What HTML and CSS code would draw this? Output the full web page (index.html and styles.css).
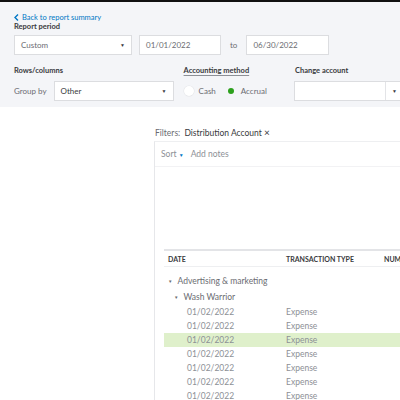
FILE: index.html
```html
<!DOCTYPE html>
<html lang="en">
  <head>
    <meta charset="UTF-8" />
    <meta name="viewport" content="width=device-width, initial-scale=1.0" />
    <title>Transaction Detail by Account</title>
    <link rel="stylesheet" href="styles.css">
  </head>
  <body>
    <div class="topbar"></div>

    <div class="controls">
      <a class="back" href="#">
        <svg width="5" height="7" viewBox="0 0 5 7"><path d="M4 0.5 L1 3.5 L4 6.5" fill="none" stroke="#0077c5" stroke-width="1.4"/></svg>
        Back to report summary
      </a>
      <div class="label">Report period</div>
      <div class="period">
        <div class="select custom">Custom <span class="caret">▼</span></div>
        <div class="input date">01/01/2022</div>
        <span class="to">to</span>
        <div class="input date date-end">06/30/2022</div>
      </div>

      <div class="options">
        <div class="group rows">
          <div class="label">Rows/columns</div>
          <div class="field">
            <span class="muted">Group by</span>
            <div class="select groupby">Other <span class="caret">▼</span></div>
          </div>
        </div>
        <div class="group method">
          <div class="label underline">Accounting method</div>
          <div class="field radios">
            <span class="radio"></span><span class="muted">Cash</span>
            <span class="radio checked"></span><span class="muted">Accrual</span>
          </div>
        </div>
        <div class="divider"></div>
        <div class="group account">
          <div class="label">Change account</div>
          <div class="select account-select"><span class="split"></span><span class="caret">▼</span></div>
        </div>
      </div>
    </div>

    <div class="report">
      <div class="filters">
        Filters: <span class="chip">Distribution Account</span> <span class="close">×</span>
      </div>
      <div class="card">
        <div class="toolbar">
          <span>Sort <span class="sort-caret">▼</span></span>
          <span>Add notes</span>
        </div>
        <div class="header-space"></div>
        <div class="table">
          <div class="thead">
            <span>DATE</span>
            <span>TRANSACTION TYPE</span>
            <span>NUM</span>
          </div>
          <div class="section">
            <div class="group-row"><span class="tri">▼</span>Advertising &amp; marketing</div>
            <div class="group-row sub"><span class="tri">▼</span>Wash Warrior</div>
            <div class="row"><span>01/02/2022</span><span>Expense</span></div>
            <div class="row"><span>01/02/2022</span><span>Expense</span></div>
            <div class="row selected"><span>01/02/2022</span><span>Expense</span></div>
            <div class="row"><span>01/02/2022</span><span>Expense</span></div>
            <div class="row"><span>01/02/2022</span><span>Expense</span></div>
            <div class="row"><span>01/02/2022</span><span>Expense</span></div>
            <div class="row"><span>01/02/2022</span><span>Expense</span></div>
          </div>
        </div>
      </div>
    </div>
  </body>
</html>
```

FILE: styles.css
```css
body {
  margin: 0;
  font-family: "Lato", "Open Sans", sans-serif;
  font-size: 8px;
  color: #393a3d;
  background: #fff;
  overflow: hidden;
}

.topbar {
  height: 2px;
  background: #111;
}

.controls {
  background: #f4f5f8;
  padding: 11px 14px 0;
  height: 94px;
}

.back {
  display: flex;
  align-items: center;
  gap: 3px;
  color: #0077c5;
  text-decoration: none;
  font-size: 7.5px;
  line-height: 9px;
}

.label {
  font-weight: bold;
  font-size: 7.5px;
  line-height: 9px;
  white-space: nowrap;
}

.underline {
  text-decoration: underline;
  text-decoration-color: #8d9096;
  text-underline-offset: 2px;
}

.period {
  display: flex;
  align-items: center;
  margin-top: 4px;
}

.select,
.input {
  box-sizing: border-box;
  height: 20px;
  background: #fff;
  border: 1px solid #dcdde0;
  display: flex;
  align-items: center;
  flex-shrink: 0;
  padding: 0 6px;
  font-size: 8px;
  color: #6b6c72;
}

.caret {
  margin-left: auto;
  font-size: 5px;
  color: #393a3d;
}

.custom {
  width: 118px;
}

.date {
  width: 82px;
  margin-left: 7px;
}

.to {
  margin: 0 9px;
  font-size: 8px;
  color: #6b6c72;
}

.date-end {
  margin-left: 0;
  width: 83px;
}

.options {
  display: flex;
  margin-top: 11px;
  align-items: flex-start;
}

.group {
  flex-shrink: 0;
}

.group .label {
  margin-bottom: 6px;
}

.field {
  display: flex;
  align-items: center;
  height: 20px;
}

.muted {
  color: #6b6c72;
  font-size: 8px;
  white-space: nowrap;
}

.groupby {
  width: 120px;
  margin-left: 7px;
  color: #393a3d;
}

.method {
  margin-left: 10px;
}

.radios .radio {
  width: 10px;
  height: 10px;
  border-radius: 50%;
  background: #fff;
  box-shadow: 0 0 0 0.5px #e3e4e7;
  margin-right: 5px;
}

.radios .radio.checked {
  width: 6px;
  height: 6px;
  background: #2ca01c;
  box-shadow: none;
  margin-left: 12px;
  margin-right: 7px;
}

.divider {
  width: 1px;
  height: 34px;
  background: #dcdde0;
  margin: -4px 13px 0 14px;
}

.account .label {
  margin-left: 1px;
}

.account-select {
  width: 120px;
  margin-top: 1px;
  padding: 0;
}

.split {
  width: 1px;
  height: 100%;
  background: #e3e4e7;
  margin-left: 90px;
}

.account-select .caret {
  margin-left: 6px;
}

.report {
  margin-left: 154px;
}

.filters {
  margin-top: 19px;
  padding-left: 1px;
  height: 15px;
  font-size: 8.5px;
  color: #6b6c72;
}

.chip {
  color: #393a3d;
  margin-left: 2px;
}

.close {
  color: #393a3d;
  font-size: 10px;
}

.card {
  border-left: 1px solid #e6e7ea;
  border-top: 1px solid #eeeff1;
  height: 260px;
}

.toolbar {
  height: 24px;
  display: flex;
  align-items: center;
  gap: 7px;
  padding-left: 6px;
  border-bottom: 1px solid #f2f2f4;
  font-size: 8.5px;
  color: #8d9096;
}

.sort-caret {
  font-size: 5px;
  color: #0077c5;
}

.header-space {
  height: 82px;
}

.table {
  margin-left: 9px;
}

.thead {
  display: grid;
  grid-template-columns: 118px 98px 1fr;
  height: 15px;
  align-items: center;
  padding-left: 4px;
  border-top: 2px solid #e3e4e7;
  border-bottom: 1px solid #eeeff1;
  font-weight: bold;
  font-size: 7px;
  color: #393a3d;
}

.section {
  padding-top: 6px;
  color: #6b6c72;
  font-size: 8.5px;
}

.group-row {
  height: 16px;
  display: flex;
  align-items: center;
  padding-left: 4px;
}

.group-row.sub {
  padding-left: 10px;
}

.tri {
  font-size: 4.5px;
  margin-right: 5px;
}

.row {
  display: grid;
  grid-template-columns: 99px 98px 1fr;
  height: 14px;
  align-items: center;
  padding-left: 23px;
  color: #8d9096;
}

.row.selected {
  background: #dff0cb;
}
```
